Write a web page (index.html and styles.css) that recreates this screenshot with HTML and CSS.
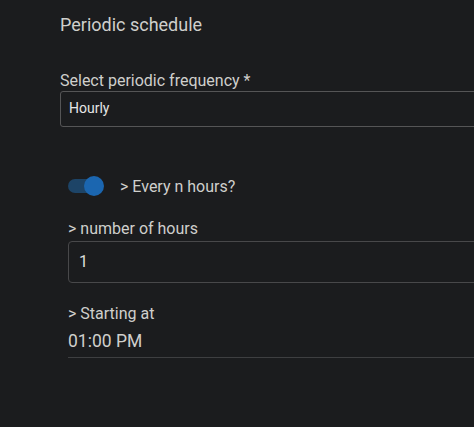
FILE: index.html
```html
<!DOCTYPE html>
<html>
<head>
<meta charset="utf-8">
<link rel="stylesheet" href="styles.css">
</head>
<body>
<div class="page">
  <h1 class="title">Periodic schedule</h1>
  <label class="label freq-label">Select periodic frequency *</label>
  <div class="select">Hourly</div>
  <div class="sub">
    <div class="toggle-row">
      <span class="toggle"><span class="knob"></span></span>
      <span class="toggle-text">&gt; Every n hours?</span>
    </div>
    <label class="label hours-label">&gt; number of hours</label>
    <div class="input">1</div>
    <label class="label start-label">&gt; Starting at</label>
    <div class="time">01:00 PM</div>
  </div>
</div>
</body>
</html>
```
FILE: styles.css
```css
html, body {
  margin: 0;
  padding: 0;
  background: #1b1c1e;
  overflow: hidden;
}
body {
  width: 474px;
  height: 427px;
  font-family: Roboto, "Noto Sans", sans-serif;
  color: #c9c9c7;
}
.page {
  padding: 14px 0 0 60px;
  width: 480px;
}
.title {
  margin: 0;
  font-size: 18px;
  font-weight: 400;
  line-height: 22px;
  color: #cfcfcc;
}
.label {
  display: block;
  font-size: 16px;
  line-height: 18px;
  color: #cfcfcc;
}
.freq-label {
  margin-top: 36px;
}
.select {
  margin-top: 1px;
  box-sizing: border-box;
  height: 36px;
  border: 1px solid #555556;
  border-radius: 3px;
  padding-left: 8px;
  font-size: 14px;
  line-height: 33px;
  color: #e6e6e6;
}
.sub {
  padding-left: 8px;
}
.toggle-row {
  display: flex;
  align-items: center;
  margin-top: 48px;
  height: 22px;
}
.toggle {
  position: relative;
  width: 34px;
  height: 14px;
  border-radius: 7px;
  background: #1d4467;
}
.knob {
  position: absolute;
  right: -2px;
  top: -3px;
  width: 20px;
  height: 20px;
  border-radius: 50%;
  background: #1b66b0;
}
.toggle-text {
  margin-left: 18px;
  font-size: 16px;
  color: #cfcfcc;
}
.hours-label {
  margin-top: 23px;
}
.input {
  margin-top: 3px;
  box-sizing: border-box;
  height: 42px;
  border: 1px solid #48484a;
  border-radius: 4px;
  padding-left: 10px;
  font-size: 16px;
  line-height: 40px;
  color: #dcdcdc;
}
.start-label {
  margin-top: 22px;
}
.time {
  margin-top: 7px;
  font-size: 17.5px;
  line-height: 22px;
  padding-bottom: 5px;
  border-bottom: 1px solid #3e3f41;
  color: #cfcfcc;
}
```
